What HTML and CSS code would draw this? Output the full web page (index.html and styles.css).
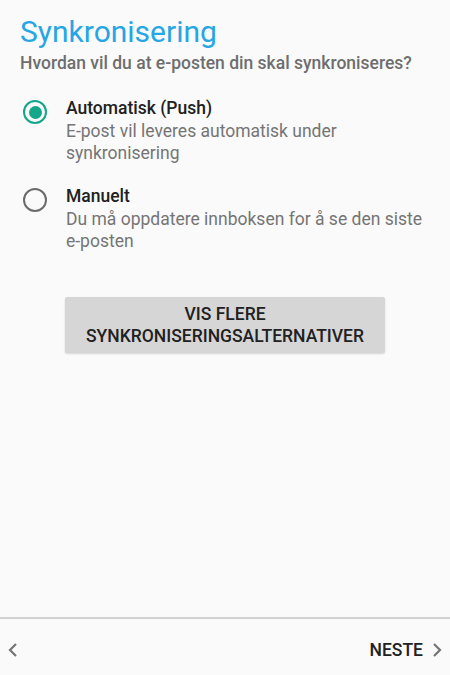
FILE: index.html
```html
<!DOCTYPE html>
<html lang="no">

<head>
    <meta charset="UTF-8">
    <meta name="viewport" content="width=device-width, initial-scale=1.0">
    <title>Synkronisering</title>
    <link rel="stylesheet" href="styles.css">
</head>

<body>
    <div id="page">
        <div id="content">
            <h1 class="title">Synkronisering</h1>
            <p class="subtitle">Hvordan vil du at e-posten din skal synkroniseres?</p>

            <div class="option">
                <span class="radio checked"></span>
                <div class="option-text">
                    <div class="option-title">Automatisk (Push)</div>
                    <div class="option-desc">E-post vil leveres automatisk under synkronisering</div>
                </div>
            </div>

            <div class="option">
                <span class="radio"></span>
                <div class="option-text">
                    <div class="option-title">Manuelt</div>
                    <div class="option-desc">Du må oppdatere innboksen for å se den siste e&#8209;posten</div>
                </div>
            </div>

            <div class="button-row">
                <button type="button" class="more-button">VIS FLERE SYNKRONISERINGSALTERNATIVER</button>
            </div>
        </div>

        <div id="footer">
            <span class="nav-back">
                <svg width="10" height="14" viewBox="0 0 10 14"><path d="M8 1 L2 7 L8 13" fill="none" stroke="#757575" stroke-width="2.2"/></svg>
            </span>
            <span class="nav-next">NESTE
                <svg width="10" height="14" viewBox="0 0 10 14"><path d="M2 1 L8 7 L2 13" fill="none" stroke="#757575" stroke-width="2.2"/></svg>
            </span>
        </div>
    </div>
</body>

</html>
```

FILE: styles.css
```css
* {
    margin: 0;
    padding: 0;
    box-sizing: border-box;
}

body {
    font-family: Roboto, "Noto Sans", sans-serif;
    background-color: #FAFAFA;
    color: #212121;
}

#page {
    display: flex;
    flex-direction: column;
    min-height: 100vh;
}

#content {
    flex: 1;
    padding: 14px 20px 0 20px;
}

.title {
    font-size: 30px;
    font-weight: 400;
    color: #27A6E6;
    line-height: 36px;
}

.subtitle {
    font-size: 17.5px;
    font-weight: 500;
    color: #6E6E6E;
    line-height: 22px;
    margin-top: 2px;
}

.option {
    display: flex;
    align-items: flex-start;
    margin-top: 23px;
}

.option + .option {
    margin-top: 21px;
}

.radio {
    flex: none;
    width: 24px;
    height: 24px;
    margin: 3px 19px 0 3px;
    border: 2.5px solid #6B6B6B;
    border-radius: 50%;
    display: flex;
    align-items: center;
    justify-content: center;
}

.radio.checked {
    border-color: #13A689;
}

.radio.checked::after {
    content: "";
    width: 13px;
    height: 13px;
    border-radius: 50%;
    background-color: #13A689;
}

.option-title {
    font-size: 17.5px;
    font-weight: 500;
    line-height: 22px;
    color: #212121;
}

.option-desc {
    font-size: 17.5px;
    line-height: 22px;
    color: #757575;
    margin-top: 1px;
}

.button-row {
    display: flex;
    justify-content: center;
    margin-top: 45px;
}

.more-button {
    width: 320px;
    height: 56px;
    border: none;
    border-radius: 2px;
    background-color: #D6D6D6;
    box-shadow: 0 1px 2px rgba(0, 0, 0, 0.15);
    font-family: Roboto, "Noto Sans", sans-serif;
    font-size: 17.5px;
    font-weight: 500;
    line-height: 22px;
    color: #212121;
    padding: 0 10px;
}

#footer {
    height: 58px;
    border-top: 2px solid #D2D2D2;
    display: flex;
    align-items: center;
    justify-content: space-between;
    padding: 5px 8px 0 8px;
}

.nav-back,
.nav-next {
    display: flex;
    align-items: center;
    gap: 9px;
    font-size: 17.5px;
    font-weight: 500;
    color: #212121;
}
```
